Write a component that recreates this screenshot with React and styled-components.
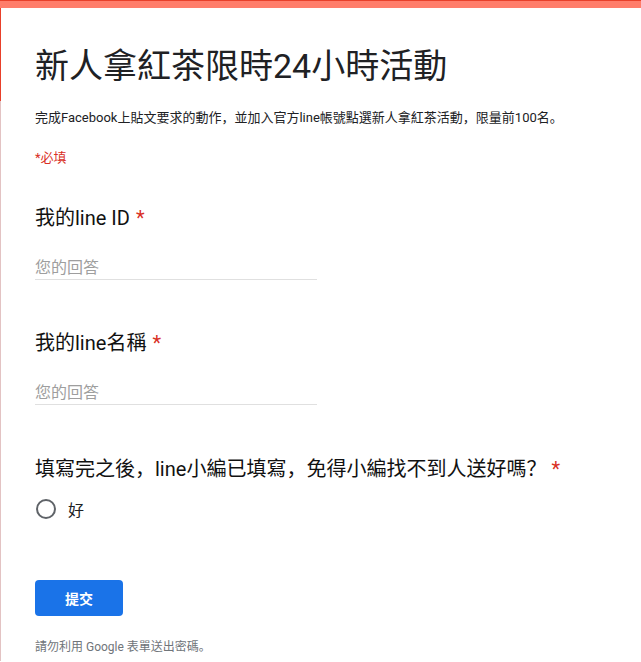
import styled, { createGlobalStyle } from "styled-components";

const GlobalStyle = createGlobalStyle`
  html, body {
    margin: 0;
    padding: 0;
    background: #fff;
  }
  body {
    font-family: Roboto, "Noto Sans CJK SC", "Noto Sans", sans-serif;
    color: #202124;
  }
`;

const Card = styled.div`
  border-top: 1px solid #e8402a;
  background: #fff;
  min-height: 661px;
  box-sizing: border-box;
`;

const Stripe = styled.div`
  height: 7px;
  background: #ff7d6a;
`;

const Header = styled.div`
  border-left: 1px solid #e8402a;
  padding: 38px 0 0 34px;
  height: 93px;
  box-sizing: border-box;
`;

const Body = styled.div`
  border-left: 1px solid #e3c3c3;
  padding: 0 0 0 34px;
  min-height: 560px;
`;

const Title = styled.h1`
  margin: 0;
  font-size: 34px;
  font-weight: 400;
  line-height: 40px;
  color: #202124;
`;

const Desc = styled.div`
  font-size: 13px;
  line-height: 18px;
  color: #202124;
  padding-top: 8px;
`;

const Required = styled.div`
  font-size: 13px;
  color: #d93025;
  line-height: 18px;
  padding-top: 22px;
`;

const Question = styled.div`
  padding-top: ${({ $top }) => $top}px;
`;

const QTitle = styled.div`
  font-size: 20px;
  line-height: 24px;
  color: #111;
`;

const Star = styled.span`
  color: #d93025;
  margin-left: ${({ $gap }) => $gap || 6}px;
`;

const Answer = styled.div`
  width: 282px;
  margin-top: 27px;
  border-bottom: 1px solid #e0e0e0;
  font-size: 16px;
  line-height: 22px;
  color: #9e9e9e;
`;

const Option = styled.label`
  display: flex;
  align-items: center;
  gap: 12px;
  margin-top: 16px;
  font-size: 16px;
  color: #202124;
`;

const Radio = styled.span`
  width: 16px;
  height: 16px;
  border: 2px solid #5f6368;
  border-radius: 50%;
  margin-left: 1px;
`;

const Submit = styled.button`
  margin-top: 59px;
  width: 88px;
  height: 36px;
  border: none;
  border-radius: 4px;
  background: #1a73e8;
  color: #fff;
  font-family: inherit;
  font-size: 14px;
  font-weight: 700;
  cursor: pointer;
`;

const Footer = styled.div`
  margin-top: 21px;
  font-size: 12px;
  color: #70757a;
`;

export default function App() {
  return (
    <>
      <GlobalStyle />
      <Card>
        <Stripe />
        <Header>
          <Title>新人拿紅茶限時24小時活動</Title>
        </Header>
        <Body>
          <Desc>完成Facebook上貼文要求的動作，並加入官方line帳號點選新人拿紅茶活動，限量前100名。</Desc>
          <Required>*必填</Required>
          <Question $top={39}>
            <QTitle>我的line ID<Star>*</Star></QTitle>
            <Answer>您的回答</Answer>
          </Question>
          <Question $top={51}>
            <QTitle>我的line名稱<Star>*</Star></QTitle>
            <Answer>您的回答</Answer>
          </Question>
          <Question $top={52}>
            <QTitle>填寫完之後，line小編已填寫，免得小編找不到人送好嗎？<Star $gap={5}>*</Star></QTitle>
            <Option>
              <Radio />
              好
            </Option>
          </Question>
          <Submit>提交</Submit>
          <Footer>請勿利用 Google 表單送出密碼。</Footer>
        </Body>
      </Card>
    </>
  );
}
